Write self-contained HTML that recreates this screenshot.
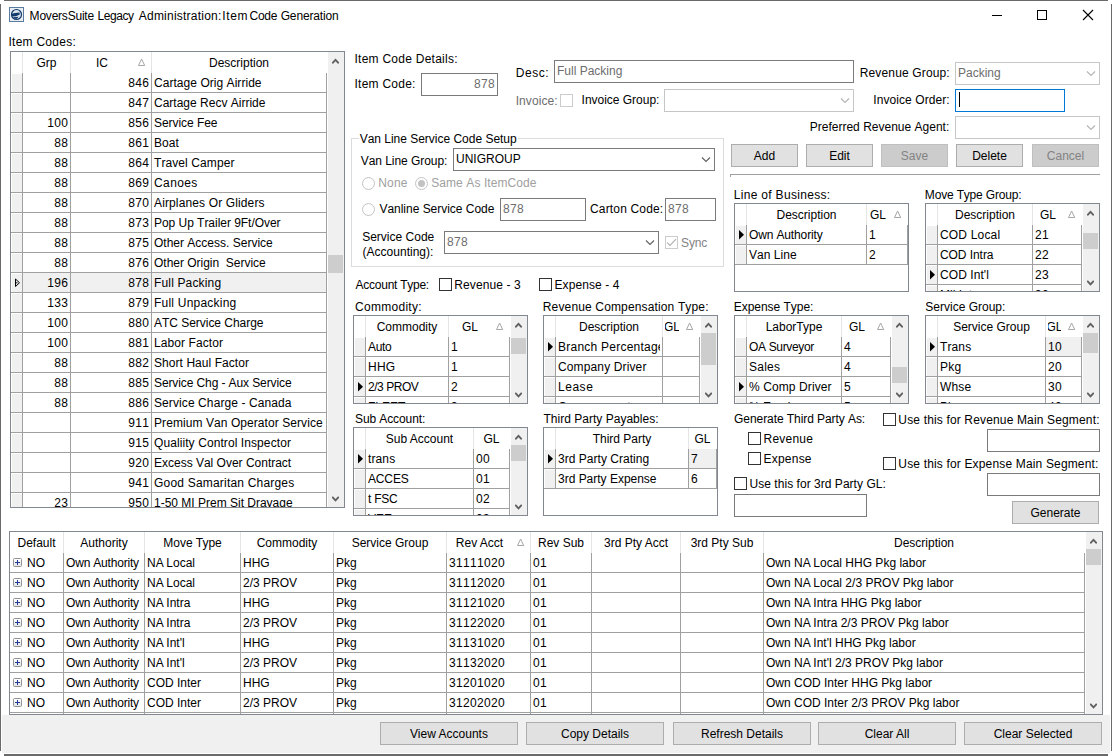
<!DOCTYPE html>
<html><head><meta charset="utf-8"><title>MoversSuite Legacy Administration: Item Code Generation</title>
<style>
html,body{margin:0;padding:0;background:#fff;}
body{width:1112px;height:756px;position:relative;overflow:hidden;font-family:"Liberation Sans",sans-serif;font-size:12px;color:#000;}
.lb{position:absolute;white-space:nowrap;line-height:14px;font-size:12px;font-kerning:none;}
.grid{position:absolute;box-sizing:border-box;border:1px solid #828790;background:#fff;overflow:hidden;}
.hs{position:absolute;width:1px;background:#e5e5e5;}
.ht{position:absolute;height:21px;line-height:23px;display:flex;justify-content:center;white-space:nowrap;overflow:hidden;}
.ht span{display:block;flex:none;}
.ct{position:absolute;height:19px;line-height:21px;white-space:pre;overflow:hidden;box-sizing:border-box;padding-left:2px;}
.rl{position:absolute;height:1px;background:#a0a0a0;}
.vl{position:absolute;width:1px;background:#a0a0a0;}
.ind{position:absolute;background:#f0f0f0;}
.sb{position:absolute;background:#f0f0f0;}
.th{position:absolute;background:#cdcdcd;}
.tb{position:absolute;box-sizing:border-box;background:#fff;}
.btn{position:absolute;box-sizing:border-box;border:1px solid #adadad;background:#e1e1e1;text-align:center;white-space:nowrap;font-size:12px;}
.btn.dis{background:#cccccc;border-color:#bfbfbf;color:#838383;}
.cb{position:absolute;box-sizing:border-box;width:13px;height:13px;border:1px solid #333;background:#fff;}
.cb.dis{border-color:#cccccc;}
.rd{position:absolute;box-sizing:border-box;width:13px;height:13px;border:1px solid #c4c4c4;border-radius:50%;background:#fff;}
.ex{position:absolute;box-sizing:border-box;width:9px;height:9px;border:1px solid #919191;border-radius:1.5px;background:linear-gradient(#fff,#e4e4e4);}
.ex:before{content:"";position:absolute;left:1px;top:3px;width:5px;height:1px;background:#1f3a93;}
.ex:after{content:"";position:absolute;left:3px;top:1px;width:1px;height:5px;background:#1f3a93;}
</style></head><body>

<div class="" style="position:absolute;left:4px;top:0px;width:1104px;height:1px;background:#6a6a6a"></div>
<div class="" style="position:absolute;left:0px;top:4px;width:1px;height:747px;background:#6a6a6a"></div>
<div class="" style="position:absolute;left:1111px;top:4px;width:1px;height:747px;background:#6a6a6a"></div>
<div class="" style="position:absolute;left:4px;top:754px;width:1104px;height:2px;background:#6a6a6a"></div>
<div class="" style="position:absolute;left:2px;top:715px;width:1108px;height:38px;background:#f0f0f0"></div>
<svg style="position:absolute;left:9px;top:7px" width="15" height="15" viewBox="0 0 15 15"><rect x="0.5" y="0.5" width="14" height="14" fill="#e9eef4" stroke="#5a7a9e"/><circle cx="7.5" cy="7.5" r="5" fill="#dfe7f0" stroke="#123a6b" stroke-width="1.2"/><path d="M2.8,6.8 L6,6 L10.5,5.6 L10.8,7.6 L7,9.3 L3,9.6 Z M4.2,10.3 L9.5,9.8 L8,11.8 L5.5,11.7Z" fill="#123a6b"/></svg>
<div class="lb" style="left:29.62px;top:9px;letter-spacing:-0.217px;">MoversSuite</div>
<div class="lb" style="left:97.52px;top:9px;letter-spacing:-0.458px;">Legacy</div>
<div class="lb" style="left:138.78px;top:9px;letter-spacing:0.225px;">Administration:</div>
<div class="lb" style="left:222.29px;top:9px;letter-spacing:0.620px;">Item</div>
<div class="lb" style="left:249.59px;top:9px;letter-spacing:-0.282px;">Code</div>
<div class="lb" style="left:280.70px;top:9px;letter-spacing:-0.154px;">Generation</div>
<div class="" style="position:absolute;left:992px;top:15px;width:10px;height:1px;background:#000"></div>
<div class="" style="position:absolute;left:1037px;top:10px;width:10px;height:10px;box-sizing:border-box;border:1px solid #000"></div>
<svg style="position:absolute;left:1082px;top:9px" width="12" height="12" viewBox="0 0 12 12"><path d="M1,1 L11,11 M11,1 L1,11" stroke="#000" stroke-width="1.1" fill="none"/></svg>
<div class="lb" style="left:8.44px;top:35px;letter-spacing:0.266px;">Item Codes:</div>
<div class="grid" style="left:10px;top:51px;width:335px;height:457px">
<div class="hs" style="left:11px;top:0;height:21px"></div>
<div class="hs" style="left:59px;top:0;height:21px"></div>
<div class="hs" style="left:140px;top:0;height:21px"></div>
<div class="ht" style="left:14px;top:0;width:43px;"><span>Grp</span></div>
<div class="ht" style="left:62px;top:0;width:58px;"><span>IC</span></div>
<svg style="position:absolute;left:127px;top:6px" width="8" height="9" viewBox="0 0 8 9"><polygon points="0.5,7.5 3.6,1 6.7,7.5" fill="#fff" stroke="#a6a6a6" stroke-width="1"/></svg>
<div class="ht" style="left:143px;top:0;width:170px;"><span>Description</span></div>
<div class="ind" style="left:1px;top:22px;width:10px;height:18px"></div>
<div class="ct" style="left:60px;top:21px;width:80px;text-align:right;padding-right:1.67px;padding-left:0;letter-spacing:0.333px;font-kerning:none;">846</div>
<div class="ct" style="left:141px;top:21px;width:172px;letter-spacing:0.044px;font-kerning:none;">Cartage Orig Airride</div>
<div class="rl" style="left:0;top:40px;width:316px"></div>
<div class="ind" style="left:1px;top:42px;width:10px;height:18px"></div>
<div class="ct" style="left:60px;top:41px;width:80px;text-align:right;padding-right:1.67px;padding-left:0;letter-spacing:0.333px;font-kerning:none;">847</div>
<div class="ct" style="left:141px;top:41px;width:172px;letter-spacing:0.003px;font-kerning:none;">Cartage Recv Airride</div>
<div class="rl" style="left:0;top:60px;width:316px"></div>
<div class="ind" style="left:1px;top:62px;width:10px;height:18px"></div>
<div class="ct" style="left:12px;top:61px;width:47px;text-align:right;padding-right:1.67px;padding-left:0;letter-spacing:0.333px;font-kerning:none;">100</div>
<div class="ct" style="left:60px;top:61px;width:80px;text-align:right;padding-right:1.67px;padding-left:0;letter-spacing:0.333px;font-kerning:none;">856</div>
<div class="ct" style="left:141px;top:61px;width:172px;letter-spacing:-0.059px;font-kerning:none;">Service Fee</div>
<div class="rl" style="left:0;top:80px;width:316px"></div>
<div class="ind" style="left:1px;top:82px;width:10px;height:18px"></div>
<div class="ct" style="left:12px;top:81px;width:47px;text-align:right;padding-right:1.67px;padding-left:0;letter-spacing:0.333px;font-kerning:none;">88</div>
<div class="ct" style="left:60px;top:81px;width:80px;text-align:right;padding-right:1.67px;padding-left:0;letter-spacing:0.333px;font-kerning:none;">861</div>
<div class="ct" style="left:141px;top:81px;width:172px;letter-spacing:0.067px;font-kerning:none;">Boat</div>
<div class="rl" style="left:0;top:100px;width:316px"></div>
<div class="ind" style="left:1px;top:102px;width:10px;height:18px"></div>
<div class="ct" style="left:12px;top:101px;width:47px;text-align:right;padding-right:1.67px;padding-left:0;letter-spacing:0.333px;font-kerning:none;">88</div>
<div class="ct" style="left:60px;top:101px;width:80px;text-align:right;padding-right:1.67px;padding-left:0;letter-spacing:0.333px;font-kerning:none;">864</div>
<div class="ct" style="left:141px;top:101px;width:172px;letter-spacing:0.087px;font-kerning:none;">Travel Camper</div>
<div class="rl" style="left:0;top:120px;width:316px"></div>
<div class="ind" style="left:1px;top:122px;width:10px;height:18px"></div>
<div class="ct" style="left:12px;top:121px;width:47px;text-align:right;padding-right:1.67px;padding-left:0;letter-spacing:0.333px;font-kerning:none;">88</div>
<div class="ct" style="left:60px;top:121px;width:80px;text-align:right;padding-right:1.67px;padding-left:0;letter-spacing:0.333px;font-kerning:none;">869</div>
<div class="ct" style="left:141px;top:121px;width:172px;letter-spacing:0.394px;font-kerning:none;">Canoes</div>
<div class="rl" style="left:0;top:140px;width:316px"></div>
<div class="ind" style="left:1px;top:142px;width:10px;height:18px"></div>
<div class="ct" style="left:12px;top:141px;width:47px;text-align:right;padding-right:1.67px;padding-left:0;letter-spacing:0.333px;font-kerning:none;">88</div>
<div class="ct" style="left:60px;top:141px;width:80px;text-align:right;padding-right:1.67px;padding-left:0;letter-spacing:0.333px;font-kerning:none;">870</div>
<div class="ct" style="left:141px;top:141px;width:172px;letter-spacing:0.131px;font-kerning:none;">Airplanes Or Gliders</div>
<div class="rl" style="left:0;top:160px;width:316px"></div>
<div class="ind" style="left:1px;top:162px;width:10px;height:18px"></div>
<div class="ct" style="left:12px;top:161px;width:47px;text-align:right;padding-right:1.67px;padding-left:0;letter-spacing:0.333px;font-kerning:none;">88</div>
<div class="ct" style="left:60px;top:161px;width:80px;text-align:right;padding-right:1.67px;padding-left:0;letter-spacing:0.333px;font-kerning:none;">873</div>
<div class="ct" style="left:141px;top:161px;width:172px;letter-spacing:-0.035px;font-kerning:none;">Pop Up Trailer 9Ft/Over</div>
<div class="rl" style="left:0;top:180px;width:316px"></div>
<div class="ind" style="left:1px;top:182px;width:10px;height:18px"></div>
<div class="ct" style="left:12px;top:181px;width:47px;text-align:right;padding-right:1.67px;padding-left:0;letter-spacing:0.333px;font-kerning:none;">88</div>
<div class="ct" style="left:60px;top:181px;width:80px;text-align:right;padding-right:1.67px;padding-left:0;letter-spacing:0.333px;font-kerning:none;">875</div>
<div class="ct" style="left:141px;top:181px;width:172px;letter-spacing:0.001px;font-kerning:none;">Other Access. Service</div>
<div class="rl" style="left:0;top:200px;width:316px"></div>
<div class="ind" style="left:1px;top:202px;width:10px;height:18px"></div>
<div class="ct" style="left:12px;top:201px;width:47px;text-align:right;padding-right:1.67px;padding-left:0;letter-spacing:0.333px;font-kerning:none;">88</div>
<div class="ct" style="left:60px;top:201px;width:80px;text-align:right;padding-right:1.67px;padding-left:0;letter-spacing:0.333px;font-kerning:none;">876</div>
<div class="ct" style="left:141px;top:201px;width:172px;letter-spacing:-0.015px;font-kerning:none;">Other Origin  Service</div>
<div class="rl" style="left:0;top:220px;width:316px"></div>
<div style="position:absolute;left:12px;top:221px;width:303px;height:19px;background:#f0f0f0"></div>
<div class="ind" style="left:1px;top:222px;width:10px;height:18px"></div>
<svg style="position:absolute;left:4px;top:226px" width="6" height="10" viewBox="0 0 6 10"><polygon points="0.5,1 4.5,4.75 0.5,8.5" fill="none" stroke="#000" stroke-width="1"/><rect x="1.2" y="4.2" width="1.2" height="1.2" fill="#000"/></svg>
<div class="ct" style="left:12px;top:221px;width:47px;text-align:right;padding-right:1.67px;padding-left:0;letter-spacing:0.333px;font-kerning:none;">196</div>
<div class="ct" style="left:60px;top:221px;width:80px;text-align:right;padding-right:1.67px;padding-left:0;letter-spacing:0.333px;font-kerning:none;">878</div>
<div class="ct" style="left:141px;top:221px;width:172px;letter-spacing:0.156px;font-kerning:none;">Full Packing</div>
<div class="rl" style="left:0;top:240px;width:316px"></div>
<div class="ind" style="left:1px;top:242px;width:10px;height:18px"></div>
<div class="ct" style="left:12px;top:241px;width:47px;text-align:right;padding-right:1.67px;padding-left:0;letter-spacing:0.333px;font-kerning:none;">133</div>
<div class="ct" style="left:60px;top:241px;width:80px;text-align:right;padding-right:1.67px;padding-left:0;letter-spacing:0.333px;font-kerning:none;">879</div>
<div class="ct" style="left:141px;top:241px;width:172px;letter-spacing:0.223px;font-kerning:none;">Full Unpacking</div>
<div class="rl" style="left:0;top:260px;width:316px"></div>
<div class="ind" style="left:1px;top:262px;width:10px;height:18px"></div>
<div class="ct" style="left:12px;top:261px;width:47px;text-align:right;padding-right:1.67px;padding-left:0;letter-spacing:0.333px;font-kerning:none;">100</div>
<div class="ct" style="left:60px;top:261px;width:80px;text-align:right;padding-right:1.67px;padding-left:0;letter-spacing:0.333px;font-kerning:none;">880</div>
<div class="ct" style="left:141px;top:261px;width:172px;letter-spacing:-0.030px;font-kerning:none;">ATC Service Charge</div>
<div class="rl" style="left:0;top:280px;width:316px"></div>
<div class="ind" style="left:1px;top:282px;width:10px;height:18px"></div>
<div class="ct" style="left:12px;top:281px;width:47px;text-align:right;padding-right:1.67px;padding-left:0;letter-spacing:0.333px;font-kerning:none;">100</div>
<div class="ct" style="left:60px;top:281px;width:80px;text-align:right;padding-right:1.67px;padding-left:0;letter-spacing:0.333px;font-kerning:none;">881</div>
<div class="ct" style="left:141px;top:281px;width:172px;letter-spacing:0.088px;font-kerning:none;">Labor Factor</div>
<div class="rl" style="left:0;top:300px;width:316px"></div>
<div class="ind" style="left:1px;top:302px;width:10px;height:18px"></div>
<div class="ct" style="left:12px;top:301px;width:47px;text-align:right;padding-right:1.67px;padding-left:0;letter-spacing:0.333px;font-kerning:none;">88</div>
<div class="ct" style="left:60px;top:301px;width:80px;text-align:right;padding-right:1.67px;padding-left:0;letter-spacing:0.333px;font-kerning:none;">882</div>
<div class="ct" style="left:141px;top:301px;width:172px;letter-spacing:0.060px;font-kerning:none;">Short Haul Factor</div>
<div class="rl" style="left:0;top:320px;width:316px"></div>
<div class="ind" style="left:1px;top:322px;width:10px;height:18px"></div>
<div class="ct" style="left:12px;top:321px;width:47px;text-align:right;padding-right:1.67px;padding-left:0;letter-spacing:0.333px;font-kerning:none;">88</div>
<div class="ct" style="left:60px;top:321px;width:80px;text-align:right;padding-right:1.67px;padding-left:0;letter-spacing:0.333px;font-kerning:none;">885</div>
<div class="ct" style="left:141px;top:321px;width:172px;letter-spacing:-0.101px;font-kerning:none;">Service Chg - Aux Service</div>
<div class="rl" style="left:0;top:340px;width:316px"></div>
<div class="ind" style="left:1px;top:342px;width:10px;height:18px"></div>
<div class="ct" style="left:12px;top:341px;width:47px;text-align:right;padding-right:1.67px;padding-left:0;letter-spacing:0.333px;font-kerning:none;">88</div>
<div class="ct" style="left:60px;top:341px;width:80px;text-align:right;padding-right:1.67px;padding-left:0;letter-spacing:0.333px;font-kerning:none;">886</div>
<div class="ct" style="left:141px;top:341px;width:172px;letter-spacing:0.095px;font-kerning:none;">Service Charge - Canada</div>
<div class="rl" style="left:0;top:360px;width:316px"></div>
<div class="ind" style="left:1px;top:362px;width:10px;height:18px"></div>
<div class="ct" style="left:60px;top:361px;width:80px;text-align:right;padding-right:1.67px;padding-left:0;letter-spacing:0.333px;font-kerning:none;">911</div>
<div class="ct" style="left:141px;top:361px;width:172px;letter-spacing:0.071px;font-kerning:none;">Premium Van Operator Service</div>
<div class="rl" style="left:0;top:380px;width:316px"></div>
<div class="ind" style="left:1px;top:382px;width:10px;height:18px"></div>
<div class="ct" style="left:60px;top:381px;width:80px;text-align:right;padding-right:1.67px;padding-left:0;letter-spacing:0.333px;font-kerning:none;">915</div>
<div class="ct" style="left:141px;top:381px;width:172px;letter-spacing:0.087px;font-kerning:none;">Qualiity Control Inspector</div>
<div class="rl" style="left:0;top:400px;width:316px"></div>
<div class="ind" style="left:1px;top:402px;width:10px;height:18px"></div>
<div class="ct" style="left:60px;top:401px;width:80px;text-align:right;padding-right:1.67px;padding-left:0;letter-spacing:0.333px;font-kerning:none;">920</div>
<div class="ct" style="left:141px;top:401px;width:172px;letter-spacing:-0.008px;font-kerning:none;">Excess Val Over Contract</div>
<div class="rl" style="left:0;top:420px;width:316px"></div>
<div class="ind" style="left:1px;top:422px;width:10px;height:18px"></div>
<div class="ct" style="left:60px;top:421px;width:80px;text-align:right;padding-right:1.67px;padding-left:0;letter-spacing:0.333px;font-kerning:none;">941</div>
<div class="ct" style="left:141px;top:421px;width:172px;letter-spacing:0.198px;font-kerning:none;">Good Samaritan Charges</div>
<div class="rl" style="left:0;top:440px;width:316px"></div>
<div class="ind" style="left:1px;top:442px;width:10px;height:18px"></div>
<div class="ct" style="left:12px;top:441px;width:47px;text-align:right;padding-right:1.67px;padding-left:0;letter-spacing:0.333px;font-kerning:none;">23</div>
<div class="ct" style="left:60px;top:441px;width:80px;text-align:right;padding-right:1.67px;padding-left:0;letter-spacing:0.333px;font-kerning:none;">950</div>
<div class="ct" style="left:141px;top:441px;width:172px;letter-spacing:-0.004px;font-kerning:none;">1-50 MI Prem Sit Drayage</div>
<div class="rl" style="left:0;top:460px;width:316px"></div>
<div class="vl" style="left:11px;top:21px;height:434px"></div>
<div class="vl" style="left:59px;top:21px;height:434px"></div>
<div class="vl" style="left:140px;top:21px;height:434px"></div>
<div class="vl" style="left:315px;top:21px;height:434px"></div>
<div class="sb" style="left:317px;top:0;width:16px;height:455px"></div>
<div class="th" style="left:317px;top:203px;width:15px;height:18px"></div>
<svg style="position:absolute;left:321px;top:5.600000000000001px" width="7" height="7" viewBox="0 0 7 7"><polyline points="0.2,5.3 3.5,1.8 6.8,5.3" fill="none" stroke="#606060" stroke-width="1.9"/></svg>
<svg style="position:absolute;left:321px;top:444.2px" width="7" height="7" viewBox="0 0 7 7"><polyline points="0.2,0.8 3.5,4.3 6.8,0.8" fill="none" stroke="#606060" stroke-width="1.9"/></svg>
</div>
<div class="lb" style="left:354.49px;top:52px;letter-spacing:0.253px;">Item Code Details:</div>
<div class="lb" style="left:354.49px;top:77px;letter-spacing:0.246px;">Item Code:</div>
<div class="tb" style="left:421px;top:73px;width:77px;height:23px;border:1px solid #7a7a7a;color:#6d6d6d;"><div class="lb" style="right:2px;top:3px;color:#6d6d6d;letter-spacing:0.333px;font-kerning:none;">878</div></div>
<div class="lb" style="left:515.82px;top:66px;letter-spacing:0.502px;">Desc:</div>
<div class="tb" style="left:554px;top:60px;width:300px;height:23px;border:1px solid #7a7a7a;color:#6d6d6d;"><div class="lb" style="left:2px;top:3px;color:#6d6d6d;">Full Packing</div></div>
<div class="lb" style="left:515.69px;top:94px;letter-spacing:0.078px;color:#6d6d6d;">Invoice:</div>
<div class="cb dis" style="left:560px;top:94px"></div>
<div class="lb" style="left:581.59px;top:93px;letter-spacing:-0.018px;">Invoice Group:</div>
<div class="tb" style="left:664px;top:89px;width:190px;height:23px;border:1px solid #c6c6c6;color:#6d6d6d;"></div>
<svg style="position:absolute;left:840px;top:98px" width="10" height="6" viewBox="0 0 10 6"><polyline points="1,0.5 5,4.5 9,0.5" fill="none" stroke="#b4b4b4" stroke-width="1.1"/></svg>
<div class="lb" style="left:859.72px;top:66px;letter-spacing:0.148px;">Revenue Group:</div>
<div class="tb" style="left:955px;top:62px;width:145px;height:23px;border:1px solid #c6c6c6;color:#6d6d6d;"><div class="lb" style="left:2px;top:3px;color:#6d6d6d;">Packing</div></div>
<svg style="position:absolute;left:1086px;top:71px" width="10" height="6" viewBox="0 0 10 6"><polyline points="1,0.5 5,4.5 9,0.5" fill="none" stroke="#b4b4b4" stroke-width="1.1"/></svg>
<div class="lb" style="left:873.29px;top:93px;letter-spacing:0.080px;">Invoice Order:</div>
<div class="tb" style="left:955px;top:89px;width:110px;height:23px;border:1px solid #0078d7;color:#6d6d6d;"></div>
<div class="" style="position:absolute;left:959px;top:92px;width:1px;height:15px;background:#000"></div>
<div class="lb" style="left:809.72px;top:120px;letter-spacing:0.007px;">Preferred Revenue Agent:</div>
<div class="tb" style="left:955px;top:116px;width:145px;height:23px;border:1px solid #c6c6c6;color:#6d6d6d;"></div>
<svg style="position:absolute;left:1086px;top:125px" width="10" height="6" viewBox="0 0 10 6"><polyline points="1,0.5 5,4.5 9,0.5" fill="none" stroke="#b4b4b4" stroke-width="1.1"/></svg>
<div class="btn" style="left:731px;top:144px;width:67px;height:23px;line-height:23px;">Add</div>
<div class="btn" style="left:806px;top:144px;width:67px;height:23px;line-height:23px;">Edit</div>
<div class="btn dis" style="left:881px;top:144px;width:67px;height:23px;line-height:23px;">Save</div>
<div class="btn" style="left:956px;top:144px;width:67px;height:23px;line-height:23px;">Delete</div>
<div class="btn dis" style="left:1032px;top:144px;width:67px;height:23px;line-height:23px;">Cancel</div>
<div class="" style="position:absolute;left:730px;top:174px;width:370px;height:1px;background:#a0a0a0"></div>
<div class="" style="position:absolute;left:730px;top:174px;width:1px;height:3px;background:#a0a0a0"></div>
<div class="" style="position:absolute;left:351px;top:138px;width:373px;height:129px;box-sizing:border-box;border:1px solid #dcdcdc"></div>
<div class="" style="position:absolute;left:359px;top:136px;width:159px;height:6px;background:#fff"></div>
<div class="lb" style="left:359.65px;top:132px;letter-spacing:-0.015px;">Van Line Service Code Setup</div>
<div class="lb" style="left:360.75px;top:154px;letter-spacing:-0.053px;">Van Line Group:</div>
<div class="tb" style="left:453px;top:148px;width:262px;height:23px;border:1px solid #7a7a7a;color:#000;"><div class="lb" style="left:2px;top:3px;color:#000;">UNIGROUP</div></div>
<svg style="position:absolute;left:701px;top:157px" width="10" height="6" viewBox="0 0 10 6"><polyline points="1,0.5 5,4.5 9,0.5" fill="none" stroke="#606060" stroke-width="1.1"/></svg>
<div class="rd" style="left:362px;top:177px"></div>
<div class="lb" style="left:378.22px;top:176px;letter-spacing:0.177px;color:#a0a0a0;">None</div>
<div class="rd" style="left:415px;top:177px"><div style="position:absolute;left:2px;top:2px;width:7px;height:7px;border-radius:50%;background:#c2c2c2"></div></div>
<div class="lb" style="left:431.16px;top:176px;letter-spacing:0.089px;color:#a0a0a0;">Same As ItemCode</div>
<div class="rd" style="left:362px;top:203px"></div>
<div class="lb" style="left:379.45px;top:202px;letter-spacing:-0.022px;">Vanline Service Code</div>
<div class="tb" style="left:500px;top:198px;width:86px;height:23px;border:1px solid #7a7a7a;color:#6d6d6d;"><div class="lb" style="left:2px;top:3px;color:#6d6d6d;letter-spacing:0.333px;font-kerning:none;">878</div></div>
<div class="lb" style="left:589.99px;top:202px;letter-spacing:0.167px;">Carton Code:</div>
<div class="tb" style="left:665px;top:198px;width:51px;height:23px;border:1px solid #7a7a7a;color:#6d6d6d;"><div class="lb" style="left:2px;top:3px;color:#6d6d6d;letter-spacing:0.333px;font-kerning:none;">878</div></div>
<div class="lb" style="left:362.16px;top:230px;letter-spacing:0.004px;">Service Code</div>
<div class="lb" style="left:362.56px;top:245px;letter-spacing:0.012px;">(Accounting):</div>
<div class="tb" style="left:444px;top:231px;width:215px;height:23px;border:1px solid #7a7a7a;color:#6d6d6d;"><div class="lb" style="left:2px;top:3px;color:#6d6d6d;letter-spacing:0.333px;font-kerning:none;">878</div></div>
<svg style="position:absolute;left:645px;top:240px" width="10" height="6" viewBox="0 0 10 6"><polyline points="1,0.5 5,4.5 9,0.5" fill="none" stroke="#606060" stroke-width="1.1"/></svg>
<div class="cb dis" style="left:665px;top:236px"><svg width="11" height="11" viewBox="0 0 11 11" style="position:absolute;left:0;top:0"><polyline points="1.2,5.6 4,8.4 10,2.2" fill="none" stroke="#b0b0b0" stroke-width="1.2"/></svg></div>
<div class="lb" style="left:681.06px;top:236px;letter-spacing:-0.172px;color:#838383;">Sync</div>
<div class="lb" style="left:355.58px;top:278px;letter-spacing:-0.257px;">Account Type:</div>
<div class="cb" style="left:439px;top:278px"></div>
<div class="lb" style="left:454.32px;top:278px;letter-spacing:0.094px;">Revenue - 3</div>
<div class="cb" style="left:539px;top:278px"></div>
<div class="lb" style="left:554.52px;top:278px;letter-spacing:0.090px;">Expense - 4</div>
<div class="lb" style="left:733.72px;top:188px;letter-spacing:0.312px;">Line of Business:</div>
<div class="lb" style="left:924.82px;top:188px;letter-spacing:-0.173px;">Move Type Group:</div>
<div class="lb" style="left:354.99px;top:300px;letter-spacing:0.288px;">Commodity:</div>
<div class="lb" style="left:542.82px;top:300px;letter-spacing:0.143px;">Revenue Compensation Type:</div>
<div class="lb" style="left:733.72px;top:300px;letter-spacing:-0.030px;">Expense Type:</div>
<div class="lb" style="left:925.26px;top:300px;letter-spacing:0.008px;">Service Group:</div>
<div class="lb" style="left:355.06px;top:412px;letter-spacing:-0.103px;">Sub Account:</div>
<div class="lb" style="left:543.53px;top:412px;letter-spacing:0.013px;">Third Party Payables:</div>
<div class="lb" style="left:734.10px;top:412px;letter-spacing:-0.070px;">Generate Third Party As:</div>
<div class="grid" style="left:734px;top:203px;width:175px;height:89px">
<div class="hs" style="left:11px;top:0;height:21px"></div>
<div class="hs" style="left:131px;top:0;height:21px"></div>
<div class="ht" style="left:14px;top:0;width:115px;"><span>Description</span></div>
<div class="ht" style="left:134px;top:0;width:18px;"><span>GL</span></div>
<svg style="position:absolute;left:159px;top:6px" width="8" height="9" viewBox="0 0 8 9"><polygon points="0.5,7.5 3.6,1 6.7,7.5" fill="#fff" stroke="#a6a6a6" stroke-width="1"/></svg>
<div class="ind" style="left:1px;top:22px;width:10px;height:18px"></div>
<svg style="position:absolute;left:4px;top:26px" width="6" height="10" viewBox="0 0 6 10"><polygon points="0,0 5,4.75 0,9.5" fill="#000"/></svg>
<div class="ct" style="left:12px;top:21px;width:117px;letter-spacing:-0.137px;font-kerning:none;">Own Authority</div>
<div class="ct" style="left:132px;top:21px;width:38px;letter-spacing:0.333px;font-kerning:none;">1</div>
<div class="rl" style="left:0;top:40px;width:173px"></div>
<div class="ind" style="left:1px;top:42px;width:10px;height:18px"></div>
<div class="ct" style="left:12px;top:41px;width:117px;letter-spacing:0.037px;font-kerning:none;">Van Line</div>
<div class="ct" style="left:132px;top:41px;width:38px;letter-spacing:0.333px;font-kerning:none;">2</div>
<div class="rl" style="left:0;top:60px;width:173px"></div>
<div class="vl" style="left:11px;top:21px;height:40px"></div>
<div class="vl" style="left:131px;top:21px;height:40px"></div>
<div class="vl" style="left:172px;top:21px;height:40px"></div>
</div>
<div class="grid" style="left:925px;top:203px;width:175px;height:89px">
<div class="hs" style="left:11px;top:0;height:21px"></div>
<div class="hs" style="left:106px;top:0;height:21px"></div>
<div class="ht" style="left:14px;top:0;width:90px;"><span>Description</span></div>
<div class="ht" style="left:109px;top:0;width:26px;"><span>GL</span></div>
<svg style="position:absolute;left:142px;top:6px" width="8" height="9" viewBox="0 0 8 9"><polygon points="0.5,7.5 3.6,1 6.7,7.5" fill="#fff" stroke="#a6a6a6" stroke-width="1"/></svg>
<div class="ind" style="left:1px;top:22px;width:10px;height:18px"></div>
<div class="ct" style="left:12px;top:21px;width:92px;letter-spacing:0.177px;font-kerning:none;">COD Local</div>
<div class="ct" style="left:107px;top:21px;width:46px;letter-spacing:0.333px;font-kerning:none;">21</div>
<div class="rl" style="left:0;top:40px;width:156px"></div>
<div class="ind" style="left:1px;top:42px;width:10px;height:18px"></div>
<div class="ct" style="left:12px;top:41px;width:92px;letter-spacing:-0.064px;font-kerning:none;">COD Intra</div>
<div class="ct" style="left:107px;top:41px;width:46px;letter-spacing:0.333px;font-kerning:none;">22</div>
<div class="rl" style="left:0;top:60px;width:156px"></div>
<div class="ind" style="left:1px;top:62px;width:10px;height:18px"></div>
<svg style="position:absolute;left:4px;top:66px" width="6" height="10" viewBox="0 0 6 10"><polygon points="0,0 5,4.75 0,9.5" fill="#000"/></svg>
<div class="ct" style="left:12px;top:61px;width:92px;letter-spacing:0.075px;font-kerning:none;">COD Int'l</div>
<div class="ct" style="left:107px;top:61px;width:46px;letter-spacing:0.333px;font-kerning:none;">23</div>
<div class="rl" style="left:0;top:80px;width:156px"></div>
<div class="ind" style="left:1px;top:82px;width:10px;height:18px"></div>
<div class="ct" style="left:12px;top:81px;width:92px;">Mil Intra</div>
<div class="ct" style="left:107px;top:81px;width:46px;letter-spacing:0.333px;font-kerning:none;">30</div>
<div class="rl" style="left:0;top:100px;width:156px"></div>
<div class="vl" style="left:11px;top:21px;height:66px"></div>
<div class="vl" style="left:106px;top:21px;height:66px"></div>
<div class="vl" style="left:155px;top:21px;height:66px"></div>
<div class="sb" style="left:157px;top:0;width:16px;height:87px"></div>
<div class="th" style="left:157px;top:29px;width:15px;height:16px"></div>
<svg style="position:absolute;left:161px;top:5.599999999999994px" width="7" height="7" viewBox="0 0 7 7"><polyline points="0.2,5.3 3.5,1.8 6.8,5.3" fill="none" stroke="#606060" stroke-width="1.9"/></svg>
<svg style="position:absolute;left:161px;top:76.19999999999999px" width="7" height="7" viewBox="0 0 7 7"><polyline points="0.2,0.8 3.5,4.3 6.8,0.8" fill="none" stroke="#606060" stroke-width="1.9"/></svg>
</div>
<div class="grid" style="left:353px;top:315px;width:175px;height:89px">
<div class="hs" style="left:11px;top:0;height:21px"></div>
<div class="hs" style="left:94px;top:0;height:21px"></div>
<div class="ht" style="left:14px;top:0;width:78px;"><span>Commodity</span></div>
<div class="ht" style="left:97px;top:0;width:38px;"><span>GL</span></div>
<svg style="position:absolute;left:142px;top:6px" width="8" height="9" viewBox="0 0 8 9"><polygon points="0.5,7.5 3.6,1 6.7,7.5" fill="#fff" stroke="#a6a6a6" stroke-width="1"/></svg>
<div class="ind" style="left:1px;top:22px;width:10px;height:18px"></div>
<div class="ct" style="left:12px;top:21px;width:80px;letter-spacing:-0.361px;font-kerning:none;">Auto</div>
<div class="ct" style="left:95px;top:21px;width:58px;letter-spacing:0.333px;font-kerning:none;">1</div>
<div class="rl" style="left:0;top:40px;width:156px"></div>
<div class="ind" style="left:1px;top:42px;width:10px;height:18px"></div>
<div class="ct" style="left:12px;top:41px;width:80px;letter-spacing:0.215px;font-kerning:none;">HHG</div>
<div class="ct" style="left:95px;top:41px;width:58px;letter-spacing:0.333px;font-kerning:none;">1</div>
<div class="rl" style="left:0;top:60px;width:156px"></div>
<div class="ind" style="left:1px;top:62px;width:10px;height:18px"></div>
<svg style="position:absolute;left:4px;top:66px" width="6" height="10" viewBox="0 0 6 10"><polygon points="0,0 5,4.75 0,9.5" fill="#000"/></svg>
<div class="ct" style="left:12px;top:61px;width:80px;letter-spacing:-0.453px;font-kerning:none;">2/3 PROV</div>
<div class="ct" style="left:95px;top:61px;width:58px;letter-spacing:0.333px;font-kerning:none;">2</div>
<div class="rl" style="left:0;top:80px;width:156px"></div>
<div class="ind" style="left:1px;top:82px;width:10px;height:18px"></div>
<div class="ct" style="left:12px;top:81px;width:80px;">FLEET</div>
<div class="ct" style="left:95px;top:81px;width:58px;letter-spacing:0.333px;font-kerning:none;">3</div>
<div class="rl" style="left:0;top:100px;width:156px"></div>
<div class="vl" style="left:11px;top:21px;height:66px"></div>
<div class="vl" style="left:94px;top:21px;height:66px"></div>
<div class="vl" style="left:155px;top:21px;height:66px"></div>
<div class="sb" style="left:157px;top:0;width:16px;height:87px"></div>
<div class="th" style="left:157px;top:22px;width:15px;height:16px"></div>
<svg style="position:absolute;left:161px;top:5.600000000000023px" width="7" height="7" viewBox="0 0 7 7"><polyline points="0.2,5.3 3.5,1.8 6.8,5.3" fill="none" stroke="#606060" stroke-width="1.9"/></svg>
<svg style="position:absolute;left:161px;top:76.19999999999999px" width="7" height="7" viewBox="0 0 7 7"><polyline points="0.2,0.8 3.5,4.3 6.8,0.8" fill="none" stroke="#606060" stroke-width="1.9"/></svg>
</div>
<div class="grid" style="left:543px;top:315px;width:175px;height:89px">
<div class="hs" style="left:11px;top:0;height:21px"></div>
<div class="hs" style="left:118px;top:0;height:21px"></div>
<div class="ht" style="left:14px;top:0;width:102px;"><span>Description</span></div>
<div class="ht" style="left:121px;top:0;width:14px;"><span>GL</span></div>
<svg style="position:absolute;left:142px;top:6px" width="8" height="9" viewBox="0 0 8 9"><polygon points="0.5,7.5 3.6,1 6.7,7.5" fill="#fff" stroke="#a6a6a6" stroke-width="1"/></svg>
<div class="ind" style="left:1px;top:22px;width:10px;height:18px"></div>
<svg style="position:absolute;left:4px;top:26px" width="6" height="10" viewBox="0 0 6 10"><polygon points="0,0 5,4.75 0,9.5" fill="#000"/></svg>
<div class="ct" style="left:12px;top:21px;width:104px;letter-spacing:0.238px;font-kerning:none;">Branch Percentage</div>
<div class="rl" style="left:0;top:40px;width:156px"></div>
<div class="ind" style="left:1px;top:42px;width:10px;height:18px"></div>
<div class="ct" style="left:12px;top:41px;width:104px;letter-spacing:0.132px;font-kerning:none;">Company Driver</div>
<div class="rl" style="left:0;top:60px;width:156px"></div>
<div class="ind" style="left:1px;top:62px;width:10px;height:18px"></div>
<div class="ct" style="left:12px;top:61px;width:104px;letter-spacing:0.534px;font-kerning:none;">Lease</div>
<div class="rl" style="left:0;top:80px;width:156px"></div>
<div class="ind" style="left:1px;top:82px;width:10px;height:18px"></div>
<div class="ct" style="left:12px;top:81px;width:104px;">Owner operator</div>
<div class="rl" style="left:0;top:100px;width:156px"></div>
<div class="vl" style="left:11px;top:21px;height:66px"></div>
<div class="vl" style="left:118px;top:21px;height:66px"></div>
<div class="vl" style="left:155px;top:21px;height:66px"></div>
<div class="sb" style="left:157px;top:0;width:16px;height:87px"></div>
<div class="th" style="left:157px;top:17px;width:15px;height:32px"></div>
<svg style="position:absolute;left:161px;top:5.600000000000023px" width="7" height="7" viewBox="0 0 7 7"><polyline points="0.2,5.3 3.5,1.8 6.8,5.3" fill="none" stroke="#606060" stroke-width="1.9"/></svg>
<svg style="position:absolute;left:161px;top:76.19999999999999px" width="7" height="7" viewBox="0 0 7 7"><polyline points="0.2,0.8 3.5,4.3 6.8,0.8" fill="none" stroke="#606060" stroke-width="1.9"/></svg>
</div>
<div class="grid" style="left:734px;top:315px;width:175px;height:89px">
<div class="hs" style="left:11px;top:0;height:21px"></div>
<div class="hs" style="left:106px;top:0;height:21px"></div>
<div class="ht" style="left:14px;top:0;width:90px;"><span>LaborType</span></div>
<div class="ht" style="left:109px;top:0;width:26px;"><span>GL</span></div>
<svg style="position:absolute;left:142px;top:6px" width="8" height="9" viewBox="0 0 8 9"><polygon points="0.5,7.5 3.6,1 6.7,7.5" fill="#fff" stroke="#a6a6a6" stroke-width="1"/></svg>
<div class="ind" style="left:1px;top:22px;width:10px;height:18px"></div>
<div class="ct" style="left:12px;top:21px;width:92px;letter-spacing:-0.339px;font-kerning:none;">OA Surveyor</div>
<div class="ct" style="left:107px;top:21px;width:46px;letter-spacing:0.333px;font-kerning:none;">4</div>
<div class="rl" style="left:0;top:40px;width:156px"></div>
<div class="ind" style="left:1px;top:42px;width:10px;height:18px"></div>
<div class="ct" style="left:12px;top:41px;width:92px;letter-spacing:0.254px;font-kerning:none;">Sales</div>
<div class="ct" style="left:107px;top:41px;width:46px;letter-spacing:0.333px;font-kerning:none;">4</div>
<div class="rl" style="left:0;top:60px;width:156px"></div>
<div class="ind" style="left:1px;top:62px;width:10px;height:18px"></div>
<svg style="position:absolute;left:4px;top:66px" width="6" height="10" viewBox="0 0 6 10"><polygon points="0,0 5,4.75 0,9.5" fill="#000"/></svg>
<div class="ct" style="left:12px;top:61px;width:92px;letter-spacing:0.104px;font-kerning:none;">% Comp Driver</div>
<div class="ct" style="left:107px;top:61px;width:46px;letter-spacing:0.333px;font-kerning:none;">5</div>
<div class="rl" style="left:0;top:80px;width:156px"></div>
<div class="ind" style="left:1px;top:82px;width:10px;height:18px"></div>
<div class="ct" style="left:12px;top:81px;width:92px;">% Employee</div>
<div class="ct" style="left:107px;top:81px;width:46px;letter-spacing:0.333px;font-kerning:none;">5</div>
<div class="rl" style="left:0;top:100px;width:156px"></div>
<div class="vl" style="left:11px;top:21px;height:66px"></div>
<div class="vl" style="left:106px;top:21px;height:66px"></div>
<div class="vl" style="left:155px;top:21px;height:66px"></div>
<div class="sb" style="left:157px;top:0;width:16px;height:87px"></div>
<div class="th" style="left:157px;top:51px;width:15px;height:16px"></div>
<svg style="position:absolute;left:161px;top:5.600000000000023px" width="7" height="7" viewBox="0 0 7 7"><polyline points="0.2,5.3 3.5,1.8 6.8,5.3" fill="none" stroke="#606060" stroke-width="1.9"/></svg>
<svg style="position:absolute;left:161px;top:76.19999999999999px" width="7" height="7" viewBox="0 0 7 7"><polyline points="0.2,0.8 3.5,4.3 6.8,0.8" fill="none" stroke="#606060" stroke-width="1.9"/></svg>
</div>
<div class="grid" style="left:925px;top:315px;width:175px;height:89px">
<div class="hs" style="left:11px;top:0;height:21px"></div>
<div class="hs" style="left:119px;top:0;height:21px"></div>
<div class="ht" style="left:14px;top:0;width:103px;"><span>Service Group</span></div>
<div class="ht" style="left:122px;top:0;width:13px;"><span>GL</span></div>
<svg style="position:absolute;left:142px;top:6px" width="8" height="9" viewBox="0 0 8 9"><polygon points="0.5,7.5 3.6,1 6.7,7.5" fill="#fff" stroke="#a6a6a6" stroke-width="1"/></svg>
<div class="ind" style="left:1px;top:22px;width:10px;height:18px"></div>
<svg style="position:absolute;left:4px;top:26px" width="6" height="10" viewBox="0 0 6 10"><polygon points="0,0 5,4.75 0,9.5" fill="#000"/></svg>
<div class="ct" style="left:12px;top:21px;width:105px;letter-spacing:0.115px;font-kerning:none;">Trans</div>
<div class="ct" style="left:120px;top:21px;width:35px;background:#f0f0f0;letter-spacing:0.333px;font-kerning:none;">10</div>
<div class="rl" style="left:0;top:40px;width:156px"></div>
<div class="ind" style="left:1px;top:42px;width:10px;height:18px"></div>
<div class="ct" style="left:12px;top:41px;width:105px;letter-spacing:0.198px;font-kerning:none;">Pkg</div>
<div class="ct" style="left:120px;top:41px;width:33px;letter-spacing:0.333px;font-kerning:none;">20</div>
<div class="rl" style="left:0;top:60px;width:156px"></div>
<div class="ind" style="left:1px;top:62px;width:10px;height:18px"></div>
<div class="ct" style="left:12px;top:61px;width:105px;letter-spacing:0.186px;font-kerning:none;">Whse</div>
<div class="ct" style="left:120px;top:61px;width:33px;letter-spacing:0.333px;font-kerning:none;">30</div>
<div class="rl" style="left:0;top:80px;width:156px"></div>
<div class="ind" style="left:1px;top:82px;width:10px;height:18px"></div>
<div class="ct" style="left:12px;top:81px;width:105px;">Plan</div>
<div class="ct" style="left:120px;top:81px;width:33px;letter-spacing:0.333px;font-kerning:none;">40</div>
<div class="rl" style="left:0;top:100px;width:156px"></div>
<div class="vl" style="left:11px;top:21px;height:66px"></div>
<div class="vl" style="left:119px;top:21px;height:66px"></div>
<div class="vl" style="left:155px;top:21px;height:66px"></div>
<div class="sb" style="left:157px;top:0;width:16px;height:87px"></div>
<div class="th" style="left:157px;top:17px;width:15px;height:20px"></div>
<svg style="position:absolute;left:161px;top:5.600000000000023px" width="7" height="7" viewBox="0 0 7 7"><polyline points="0.2,5.3 3.5,1.8 6.8,5.3" fill="none" stroke="#606060" stroke-width="1.9"/></svg>
<svg style="position:absolute;left:161px;top:76.19999999999999px" width="7" height="7" viewBox="0 0 7 7"><polyline points="0.2,0.8 3.5,4.3 6.8,0.8" fill="none" stroke="#606060" stroke-width="1.9"/></svg>
</div>
<div class="grid" style="left:353px;top:427px;width:175px;height:89px">
<div class="hs" style="left:11px;top:0;height:21px"></div>
<div class="hs" style="left:119px;top:0;height:21px"></div>
<div class="ht" style="left:14px;top:0;width:103px;"><span>Sub Account</span></div>
<div class="ht" style="left:122px;top:0;width:31px;"><span>GL</span></div>
<div class="ind" style="left:1px;top:22px;width:10px;height:18px"></div>
<svg style="position:absolute;left:4px;top:26px" width="6" height="10" viewBox="0 0 6 10"><polygon points="0,0 5,4.75 0,9.5" fill="#000"/></svg>
<div class="ct" style="left:12px;top:21px;width:105px;letter-spacing:0.114px;font-kerning:none;">trans</div>
<div class="ct" style="left:120px;top:21px;width:33px;letter-spacing:0.333px;font-kerning:none;">00</div>
<div class="rl" style="left:0;top:40px;width:156px"></div>
<div class="ind" style="left:1px;top:42px;width:10px;height:18px"></div>
<div class="ct" style="left:12px;top:41px;width:105px;letter-spacing:-0.148px;font-kerning:none;">ACCES</div>
<div class="ct" style="left:120px;top:41px;width:33px;letter-spacing:0.333px;font-kerning:none;">01</div>
<div class="rl" style="left:0;top:60px;width:156px"></div>
<div class="ind" style="left:1px;top:62px;width:10px;height:18px"></div>
<div class="ct" style="left:12px;top:61px;width:105px;letter-spacing:-0.253px;font-kerning:none;">t FSC</div>
<div class="ct" style="left:120px;top:61px;width:33px;letter-spacing:0.333px;font-kerning:none;">02</div>
<div class="rl" style="left:0;top:80px;width:156px"></div>
<div class="ind" style="left:1px;top:82px;width:10px;height:18px"></div>
<div class="ct" style="left:12px;top:81px;width:105px;">VEE</div>
<div class="ct" style="left:120px;top:81px;width:33px;letter-spacing:0.333px;font-kerning:none;">03</div>
<div class="rl" style="left:0;top:100px;width:156px"></div>
<div class="vl" style="left:11px;top:21px;height:66px"></div>
<div class="vl" style="left:119px;top:21px;height:66px"></div>
<div class="vl" style="left:155px;top:21px;height:66px"></div>
<div class="sb" style="left:157px;top:0;width:16px;height:87px"></div>
<div class="th" style="left:157px;top:17px;width:15px;height:16px"></div>
<svg style="position:absolute;left:161px;top:5.600000000000023px" width="7" height="7" viewBox="0 0 7 7"><polyline points="0.2,5.3 3.5,1.8 6.8,5.3" fill="none" stroke="#606060" stroke-width="1.9"/></svg>
<svg style="position:absolute;left:161px;top:76.19999999999999px" width="7" height="7" viewBox="0 0 7 7"><polyline points="0.2,0.8 3.5,4.3 6.8,0.8" fill="none" stroke="#606060" stroke-width="1.9"/></svg>
</div>
<div class="grid" style="left:543px;top:427px;width:175px;height:89px">
<div class="hs" style="left:11px;top:0;height:21px"></div>
<div class="hs" style="left:144px;top:0;height:21px"></div>
<div class="ht" style="left:14px;top:0;width:128px;"><span>Third Party</span></div>
<div class="ht" style="left:147px;top:0;width:23px;"><span>GL</span></div>
<div class="ind" style="left:1px;top:22px;width:10px;height:18px"></div>
<svg style="position:absolute;left:4px;top:26px" width="6" height="10" viewBox="0 0 6 10"><polygon points="0,0 5,4.75 0,9.5" fill="#000"/></svg>
<div class="ct" style="left:12px;top:21px;width:130px;letter-spacing:0.029px;font-kerning:none;">3rd Party Crating</div>
<div class="ct" style="left:145px;top:21px;width:27px;background:#f0f0f0;letter-spacing:0.333px;font-kerning:none;">7</div>
<div class="rl" style="left:0;top:40px;width:173px"></div>
<div class="ind" style="left:1px;top:42px;width:10px;height:18px"></div>
<div class="ct" style="left:12px;top:41px;width:130px;letter-spacing:-0.012px;font-kerning:none;">3rd Party Expense</div>
<div class="ct" style="left:145px;top:41px;width:25px;letter-spacing:0.333px;font-kerning:none;">6</div>
<div class="rl" style="left:0;top:60px;width:173px"></div>
<div class="vl" style="left:11px;top:21px;height:40px"></div>
<div class="vl" style="left:144px;top:21px;height:40px"></div>
<div class="vl" style="left:172px;top:21px;height:40px"></div>
</div>
<div class="cb" style="left:748px;top:432px"></div>
<div class="lb" style="left:763.52px;top:432px;letter-spacing:0.214px;">Revenue</div>
<div class="cb" style="left:748px;top:452px"></div>
<div class="lb" style="left:763.52px;top:452px;letter-spacing:0.220px;">Expense</div>
<div class="cb" style="left:734px;top:477px"></div>
<div class="lb" style="left:749.57px;top:477px;letter-spacing:0.034px;">Use this for 3rd Party GL:</div>
<div class="tb" style="left:734px;top:494px;width:133px;height:23px;border:1px solid #7a7a7a;color:#6d6d6d;"></div>
<div class="cb" style="left:883px;top:413px"></div>
<div class="lb" style="left:898.37px;top:413px;letter-spacing:0.152px;">Use this for Revenue Main Segment:</div>
<div class="tb" style="left:987px;top:429px;width:113px;height:23px;border:1px solid #7a7a7a;color:#6d6d6d;"></div>
<div class="cb" style="left:883px;top:457px"></div>
<div class="lb" style="left:898.37px;top:457px;letter-spacing:0.159px;">Use this for Expense Main Segment:</div>
<div class="tb" style="left:987px;top:473px;width:113px;height:23px;border:1px solid #7a7a7a;color:#6d6d6d;"></div>
<div class="btn" style="left:1012px;top:501px;width:87px;height:23px;line-height:23px;">Generate</div>
<div class="grid" style="left:9px;top:531px;width:1094px;height:184px">
<div class="hs" style="left:53px;top:0;height:21px"></div>
<div class="hs" style="left:134px;top:0;height:21px"></div>
<div class="hs" style="left:230px;top:0;height:21px"></div>
<div class="hs" style="left:323px;top:0;height:21px"></div>
<div class="hs" style="left:436px;top:0;height:21px"></div>
<div class="hs" style="left:520px;top:0;height:21px"></div>
<div class="hs" style="left:581px;top:0;height:21px"></div>
<div class="hs" style="left:670px;top:0;height:21px"></div>
<div class="hs" style="left:753px;top:0;height:21px"></div>
<div class="ht" style="left:2px;top:0;width:49px;"><span>Default</span></div>
<div class="ht" style="left:56px;top:0;width:76px;"><span>Authority</span></div>
<div class="ht" style="left:137px;top:0;width:91px;"><span>Move Type</span></div>
<div class="ht" style="left:233px;top:0;width:88px;"><span>Commodity</span></div>
<div class="ht" style="left:326px;top:0;width:108px;"><span>Service Group</span></div>
<div class="ht" style="left:439px;top:0;width:61px;"><span>Rev Acct</span></div>
<svg style="position:absolute;left:507px;top:6px" width="8" height="9" viewBox="0 0 8 9"><polygon points="0.5,7.5 3.6,1 6.7,7.5" fill="#fff" stroke="#a6a6a6" stroke-width="1"/></svg>
<div class="ht" style="left:523px;top:0;width:56px;"><span>Rev Sub</span></div>
<div class="ht" style="left:584px;top:0;width:84px;"><span>3rd Pty Acct</span></div>
<div class="ht" style="left:673px;top:0;width:78px;"><span>3rd Pty Sub</span></div>
<div class="ht" style="left:756px;top:0;width:316px;"><span>Description</span></div>
<div class="ex" style="left:3px;top:26px"></div>
<div class="ct" style="left:0px;top:21px;width:53px;padding-left:17px;">NO</div>
<div class="ct" style="left:54px;top:21px;width:78px;letter-spacing:-0.187px;font-kerning:none;">Own Authority</div>
<div class="ct" style="left:135px;top:21px;width:93px;">NA Local</div>
<div class="ct" style="left:231px;top:21px;width:90px;">HHG</div>
<div class="ct" style="left:324px;top:21px;width:110px;">Pkg</div>
<div class="ct" style="left:437px;top:21px;width:81px;letter-spacing:0.333px;font-kerning:none;">31111020</div>
<div class="ct" style="left:521px;top:21px;width:58px;letter-spacing:0.333px;font-kerning:none;">01</div>
<div class="ct" style="left:754px;top:21px;width:318px;">Own NA Local HHG Pkg labor</div>
<div class="rl" style="left:0;top:40px;width:1075px"></div>
<div class="ex" style="left:3px;top:46px"></div>
<div class="ct" style="left:0px;top:41px;width:53px;padding-left:17px;">NO</div>
<div class="ct" style="left:54px;top:41px;width:78px;letter-spacing:-0.187px;font-kerning:none;">Own Authority</div>
<div class="ct" style="left:135px;top:41px;width:93px;">NA Local</div>
<div class="ct" style="left:231px;top:41px;width:90px;">2/3 PROV</div>
<div class="ct" style="left:324px;top:41px;width:110px;">Pkg</div>
<div class="ct" style="left:437px;top:41px;width:81px;letter-spacing:0.333px;font-kerning:none;">31112020</div>
<div class="ct" style="left:521px;top:41px;width:58px;letter-spacing:0.333px;font-kerning:none;">01</div>
<div class="ct" style="left:754px;top:41px;width:318px;">Own NA Local 2/3 PROV Pkg labor</div>
<div class="rl" style="left:0;top:60px;width:1075px"></div>
<div class="ex" style="left:3px;top:66px"></div>
<div class="ct" style="left:0px;top:61px;width:53px;padding-left:17px;">NO</div>
<div class="ct" style="left:54px;top:61px;width:78px;letter-spacing:-0.187px;font-kerning:none;">Own Authority</div>
<div class="ct" style="left:135px;top:61px;width:93px;">NA Intra</div>
<div class="ct" style="left:231px;top:61px;width:90px;">HHG</div>
<div class="ct" style="left:324px;top:61px;width:110px;">Pkg</div>
<div class="ct" style="left:437px;top:61px;width:81px;letter-spacing:0.333px;font-kerning:none;">31121020</div>
<div class="ct" style="left:521px;top:61px;width:58px;letter-spacing:0.333px;font-kerning:none;">01</div>
<div class="ct" style="left:754px;top:61px;width:318px;">Own NA Intra HHG Pkg labor</div>
<div class="rl" style="left:0;top:80px;width:1075px"></div>
<div class="ex" style="left:3px;top:86px"></div>
<div class="ct" style="left:0px;top:81px;width:53px;padding-left:17px;">NO</div>
<div class="ct" style="left:54px;top:81px;width:78px;letter-spacing:-0.187px;font-kerning:none;">Own Authority</div>
<div class="ct" style="left:135px;top:81px;width:93px;">NA Intra</div>
<div class="ct" style="left:231px;top:81px;width:90px;">2/3 PROV</div>
<div class="ct" style="left:324px;top:81px;width:110px;">Pkg</div>
<div class="ct" style="left:437px;top:81px;width:81px;letter-spacing:0.333px;font-kerning:none;">31122020</div>
<div class="ct" style="left:521px;top:81px;width:58px;letter-spacing:0.333px;font-kerning:none;">01</div>
<div class="ct" style="left:754px;top:81px;width:318px;">Own NA Intra 2/3 PROV Pkg labor</div>
<div class="rl" style="left:0;top:100px;width:1075px"></div>
<div class="ex" style="left:3px;top:106px"></div>
<div class="ct" style="left:0px;top:101px;width:53px;padding-left:17px;">NO</div>
<div class="ct" style="left:54px;top:101px;width:78px;letter-spacing:-0.187px;font-kerning:none;">Own Authority</div>
<div class="ct" style="left:135px;top:101px;width:93px;">NA Int'l</div>
<div class="ct" style="left:231px;top:101px;width:90px;">HHG</div>
<div class="ct" style="left:324px;top:101px;width:110px;">Pkg</div>
<div class="ct" style="left:437px;top:101px;width:81px;letter-spacing:0.333px;font-kerning:none;">31131020</div>
<div class="ct" style="left:521px;top:101px;width:58px;letter-spacing:0.333px;font-kerning:none;">01</div>
<div class="ct" style="left:754px;top:101px;width:318px;">Own NA Int'l HHG Pkg labor</div>
<div class="rl" style="left:0;top:120px;width:1075px"></div>
<div class="ex" style="left:3px;top:126px"></div>
<div class="ct" style="left:0px;top:121px;width:53px;padding-left:17px;">NO</div>
<div class="ct" style="left:54px;top:121px;width:78px;letter-spacing:-0.187px;font-kerning:none;">Own Authority</div>
<div class="ct" style="left:135px;top:121px;width:93px;">NA Int'l</div>
<div class="ct" style="left:231px;top:121px;width:90px;">2/3 PROV</div>
<div class="ct" style="left:324px;top:121px;width:110px;">Pkg</div>
<div class="ct" style="left:437px;top:121px;width:81px;letter-spacing:0.333px;font-kerning:none;">31132020</div>
<div class="ct" style="left:521px;top:121px;width:58px;letter-spacing:0.333px;font-kerning:none;">01</div>
<div class="ct" style="left:754px;top:121px;width:318px;">Own NA Int'l 2/3 PROV Pkg labor</div>
<div class="rl" style="left:0;top:140px;width:1075px"></div>
<div class="ex" style="left:3px;top:146px"></div>
<div class="ct" style="left:0px;top:141px;width:53px;padding-left:17px;">NO</div>
<div class="ct" style="left:54px;top:141px;width:78px;letter-spacing:-0.187px;font-kerning:none;">Own Authority</div>
<div class="ct" style="left:135px;top:141px;width:93px;">COD Inter</div>
<div class="ct" style="left:231px;top:141px;width:90px;">HHG</div>
<div class="ct" style="left:324px;top:141px;width:110px;">Pkg</div>
<div class="ct" style="left:437px;top:141px;width:81px;letter-spacing:0.333px;font-kerning:none;">31201020</div>
<div class="ct" style="left:521px;top:141px;width:58px;letter-spacing:0.333px;font-kerning:none;">01</div>
<div class="ct" style="left:754px;top:141px;width:318px;">Own COD Inter HHG Pkg labor</div>
<div class="rl" style="left:0;top:160px;width:1075px"></div>
<div class="ex" style="left:3px;top:166px"></div>
<div class="ct" style="left:0px;top:161px;width:53px;padding-left:17px;">NO</div>
<div class="ct" style="left:54px;top:161px;width:78px;letter-spacing:-0.187px;font-kerning:none;">Own Authority</div>
<div class="ct" style="left:135px;top:161px;width:93px;">COD Inter</div>
<div class="ct" style="left:231px;top:161px;width:90px;">2/3 PROV</div>
<div class="ct" style="left:324px;top:161px;width:110px;">Pkg</div>
<div class="ct" style="left:437px;top:161px;width:81px;letter-spacing:0.333px;font-kerning:none;">31202020</div>
<div class="ct" style="left:521px;top:161px;width:58px;letter-spacing:0.333px;font-kerning:none;">01</div>
<div class="ct" style="left:754px;top:161px;width:318px;">Own COD Inter 2/3 PROV Pkg labor</div>
<div class="rl" style="left:0;top:180px;width:1075px"></div>
<div class="rl" style="left:0;top:200px;width:1075px"></div>
<div class="vl" style="left:53px;top:21px;height:161px"></div>
<div class="vl" style="left:134px;top:21px;height:161px"></div>
<div class="vl" style="left:230px;top:21px;height:161px"></div>
<div class="vl" style="left:323px;top:21px;height:161px"></div>
<div class="vl" style="left:436px;top:21px;height:161px"></div>
<div class="vl" style="left:520px;top:21px;height:161px"></div>
<div class="vl" style="left:581px;top:21px;height:161px"></div>
<div class="vl" style="left:670px;top:21px;height:161px"></div>
<div class="vl" style="left:753px;top:21px;height:161px"></div>
<div class="vl" style="left:1074px;top:21px;height:161px"></div>
<div class="sb" style="left:1076px;top:0;width:16px;height:182px"></div>
<div class="th" style="left:1076px;top:17px;width:15px;height:16px"></div>
<svg style="position:absolute;left:1080px;top:5.600000000000023px" width="7" height="7" viewBox="0 0 7 7"><polyline points="0.2,5.3 3.5,1.8 6.8,5.3" fill="none" stroke="#606060" stroke-width="1.9"/></svg>
<svg style="position:absolute;left:1080px;top:171.20000000000005px" width="7" height="7" viewBox="0 0 7 7"><polyline points="0.2,0.8 3.5,4.3 6.8,0.8" fill="none" stroke="#606060" stroke-width="1.9"/></svg>
</div>
<div class="btn" style="left:380px;top:722px;width:138px;height:23px;line-height:23px;">View Accounts</div>
<div class="btn" style="left:526px;top:722px;width:138px;height:23px;line-height:23px;">Copy Details</div>
<div class="btn" style="left:673px;top:722px;width:138px;height:23px;line-height:23px;">Refresh Details</div>
<div class="btn" style="left:818px;top:722px;width:138px;height:23px;line-height:23px;">Clear All</div>
<div class="btn" style="left:964px;top:722px;width:138px;height:23px;line-height:23px;">Clear Selected</div>
</body></html>
